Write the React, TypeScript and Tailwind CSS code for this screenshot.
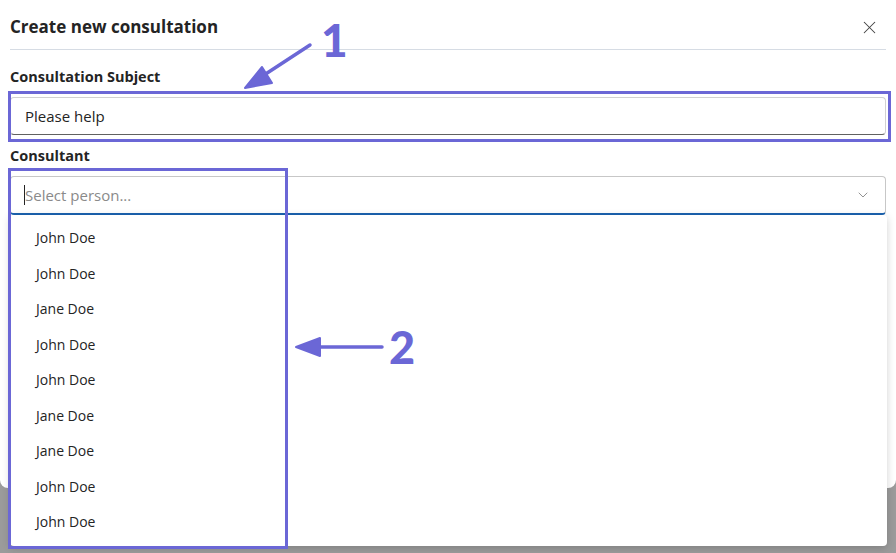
import { X, ChevronDown } from 'lucide-react';

const people = [
  'John Doe',
  'John Doe',
  'Jane Doe',
  'John Doe',
  'John Doe',
  'Jane Doe',
  'Jane Doe',
  'John Doe',
  'John Doe',
];

const font = { fontFamily: '"Open Sans", "Noto Sans", sans-serif' };

function Callout() {
  return (
    <div className="pointer-events-none absolute inset-0">
      {/* box around the subject input */}
      <div className="absolute left-[8px] top-[91px] h-[51px] w-[883px] border-[3px] border-[#6b67d6]" />
      {/* box around the person list */}
      <div className="absolute left-[8px] top-[168px] h-[381px] w-[280px] border-[3px] border-[#6b67d6]" />
      <svg className="absolute left-0 top-0" width="896" height="553">
        <line x1="310" y1="45" x2="258" y2="79" stroke="#6b67d6" strokeWidth="3.5" strokeLinecap="round" />
        <polygon points="245,88 262,67 272,83" fill="#6b67d6" stroke="#6b67d6" strokeWidth="2" strokeLinejoin="round" />
        <line x1="382" y1="347" x2="315" y2="347" stroke="#6b67d6" strokeWidth="3.5" strokeLinecap="round" />
        <polygon points="296,347 320,338 320,356" fill="#6b67d6" stroke="#6b67d6" strokeWidth="2" strokeLinejoin="round" />
      </svg>
      <span
        className="absolute left-[321px] top-[12px] text-[46px] font-black leading-[56px] text-[#6b67d6]"
        style={{ fontFamily: 'Lato, sans-serif' }}
      >
        1
      </span>
      <span
        className="absolute left-[389px] top-[319px] text-[45px] font-black leading-[56px] text-[#6b67d6]"
        style={{ fontFamily: 'Lato, sans-serif' }}
      >
        2
      </span>
    </div>
  );
}

export default function App() {
  return (
    <div className="relative h-[553px] w-[896px] overflow-hidden bg-[#9b9b9b]" style={font}>
      <div className="h-[488px] w-[896px] rounded-b-lg bg-white px-[10px]">
        <div className="flex h-[50px] items-center justify-between border-b border-[#d6dce4] pt-[5px]">
          <h2 className="text-[17px] font-bold text-[#242424]">Create new consultation</h2>
          <X className="mr-[6px] text-[#424242]" size={21} strokeWidth={1.2} />
        </div>

        <label className="mt-[17px] block text-[14.5px] font-bold leading-[20px] text-[#242424]">
          Consultation Subject
        </label>
        <div className="mt-[10px] flex h-[38px] items-center rounded-[4px] border border-[#d1d1d1] border-b-[#616161] pl-[14px] text-[15px] text-[#242424]">
          Please help
        </div>

        <label className="mt-[11px] block text-[14.5px] font-bold leading-[20px] text-[#242424]">
          Consultant
        </label>
        <div className="mt-[10px] flex h-[39px] items-center rounded-[4px] border border-[#c7c7c7] border-b-2 border-b-[#1b63b0] pl-[13px] pr-[14px]">
          <span className="h-[20px] w-px bg-[#242424]" />
          <span className="flex-1 text-[15px] text-[#8a8a8a]">Select person...</span>
          <ChevronDown className="text-[#8a8a8a]" size={16} strokeWidth={1.4} />
        </div>
      </div>

      {/* open list of people */}
      <ul className="absolute left-[10px] top-[215px] h-[331px] w-[877px] rounded-[4px] bg-white py-[5px] shadow-[0_2px_8px_rgba(0,0,0,0.18)]">
        {people.map((name, i) => (
          <li key={i} className="flex h-[35.5px] items-center pl-[26px] text-[14px] text-[#242424]">
            {name}
          </li>
        ))}
      </ul>

      <Callout />
    </div>
  );
}
